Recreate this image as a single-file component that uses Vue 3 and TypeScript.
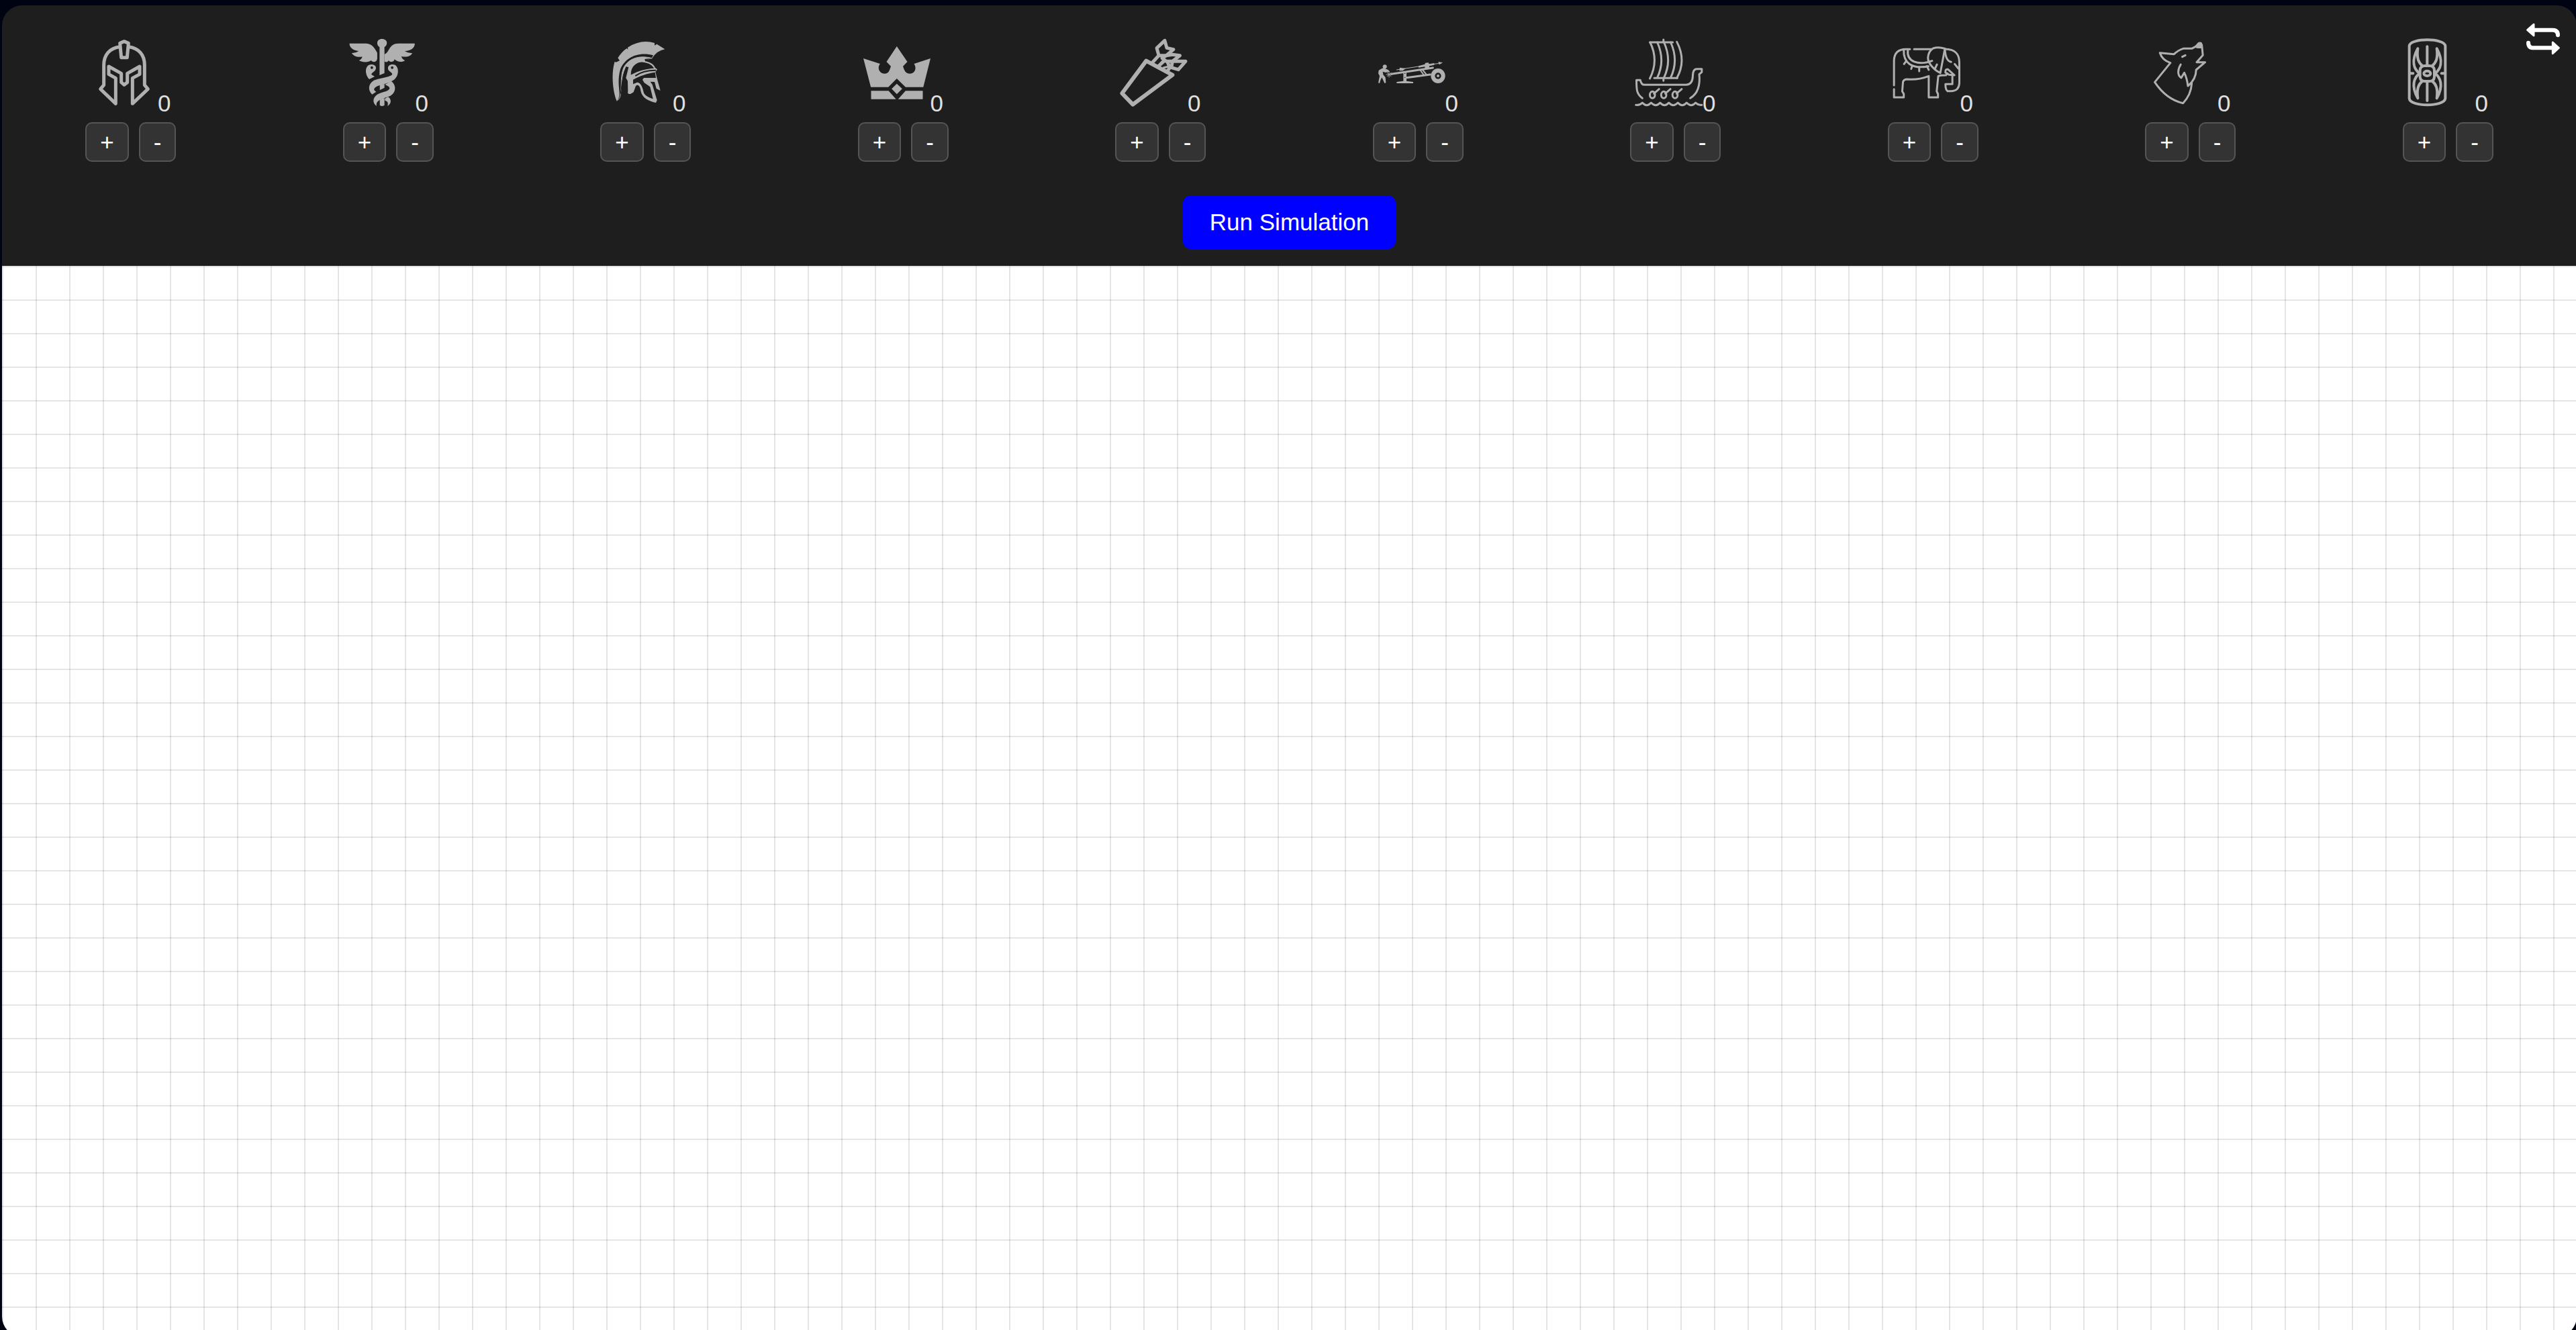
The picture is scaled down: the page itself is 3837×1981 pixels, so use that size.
<script setup lang="ts">
import { ref } from 'vue'

interface Shape {
  d: string
  // 'fill' paints the accent colour, 'cut' paints the panel colour over it
  kind: 'fill' | 'cut' | 'line' | 'cutline'
  w?: number
}

interface Unit {
  name: string
  box: string
  shapes: Shape[]
  count: number
}

const fill = (d: string): Shape => ({ d, kind: 'fill' })
const cut = (d: string): Shape => ({ d, kind: 'cut' })
const line = (d: string, w: number): Shape => ({ d, kind: 'line', w })
const cutline = (d: string, w: number): Shape => ({ d, kind: 'cutline', w })

const units = ref<Unit[]>([
  {
    name: 'Soldier',
    box: '405 174 300 300',
    count: 0,
    shapes: [
      line('M534 209C490 215 464 245 464 290V380L449 398L517 463V349L486 332V297L542 328V368L555 379L569 368V328L624 297V332L592 349V463L661 398L646 380V290C646 245 620 215 576 209', 5),
      line('M536 193L555 185L574 193L568 257H542Z', 5),
    ],
  },
  {
    name: 'Healer',
    box: '102 84 261 300',
    count: 0,
    shapes: [
      fill('M223 120C210 112 210 84 232 84C256 84 256 112 242 120V237L223 246Z'),
      fill('M242 152C262 146 258 104 297 104H360C360 124 346 136 321 138Q334 149 350 147C346 160 330 167 308 162Q310 174 322 180C310 190 292 187 281 175C280 188 264 190 258 180C254 190 244 188 242 184Z'),
      fill('M106 104H170C196 104 206 130 214 146V172C212 190 198 190 190 180C180 190 156 190 143 180Q154 175 156 163C138 168 120 160 115 147Q130 148 142 138C120 135 106 122 106 104Z'),
      fill('M183 264C163 240 166 198 192 198C206 198 213 210 207 222C202 232 190 236 192 244L204 252Z'),
      cut('M188 212a5 6 0 1 0 10 0a5 6 0 1 0 -10 0Z'),
      fill('M224 289L242 285V302L224 313Z'),
      fill('M274 198C298 198 300 240 286 258C276 276 240 286 222 292C200 300 196 312 210 320L194 332C176 312 180 284 200 270C222 258 268 254 272 242C274 234 258 230 256 218C254 206 262 198 274 198Z'),
      cut('M267 212a5 6 0 1 0 10 0a5 6 0 1 0 -10 0Z'),
      fill('M268 272C290 290 288 326 262 340C234 352 206 358 212 384C194 370 196 346 214 332C236 320 262 318 262 304C262 296 250 292 244 288Z'),
      fill('M224 354L242 348V380Q232 388 224 380Z'),
      fill('M244 350L256 343C270 352 270 374 254 384C257 372 256 362 244 360Z'),
    ],
  },
  {
    name: 'Spartan',
    box: '7 24 300 300',
    count: 0,
    shapes: [
      fill('M57 301C38 255 32 175 48 125L54 128L70 121L62 109Q80 80 102 66L107 72L106 62Q165 24 226 42L226 53L236 47L272 70Q236 76 214 112L185 118L213 110L220 97C150 78 92 110 73 160C60 205 68 240 69 265C70 280 66 293 57 301Z'),
      line('M214 110C160 96 112 108 88 152C72 190 80 225 74 270C74 285 64 298 58 300', 1),
      fill('M214 110C160 96 112 108 88 152C76 180 80 210 77 235L90 170L98 148L110 150L98 198L106 212L107 258Q103 272 118 270L132 262L142 234C152 224 162 236 164 256C170 290 205 304 232 309L237 298L216 228L207 215L226 216L234 246L252 255L238 204L230 172L238 160L228 152C222 134 200 126 184 124L182 114Z'),
      cut('M120 184C120 142 150 126 175 128C200 130 218 143 223 155C190 157 155 165 122 184Z'),
      cutline('M142 188C165 171 195 164 230 164', 2),
      cut('M130 206C160 190 190 178 228 173L232 198L178 198L172 206L180 220L206 238L219 292C200 286 180 276 177 262C172 236 162 218 148 218L130 226Z'),
      cutline('M100 150C78 190 84 220 73 270', 1),
    ],
  },
  {
    name: 'King',
    box: '68 84 261 300',
    count: 0,
    shapes: [
      fill('M68 171L133 195C120 215 132 239 150 239C168 239 170 222 175 206L158 186L198 117L239 186L222 206C227 222 230 239 250 239C268 239 277 215 265 195L329 171L301 299H232L198 261L165 299H97Z'),
      fill('M198 284L219 307L198 331L178 307Z'),
      fill('M98 316H166L195 353H98Z'),
      fill('M232 316H299V353H203Z'),
    ],
  },
  {
    name: 'Archer',
    box: '1070 84 261 300',
    count: 0,
    shapes: [
      line('M1170 182L1076 327L1118 377L1272 245Z', 6),
      line('M1242 91L1211 125L1219 158L1248 158L1276 131L1250 124Z', 5),
      line('M1219 158L1192 192', 5),
      line('M1232 170L1248 184L1272 184L1301 158L1272 154L1248 158Z', 5),
      line('M1240 180L1216 208M1252 186L1262 212L1250 232', 5),
      line('M1272 184H1323L1295 221L1268 212Z', 5),
      line('M1222 204L1242 184M1238 212L1262 206', 3),
    ],
  },
  {
    name: 'Ballista',
    box: '40 -66 300 300',
    count: 0,
    shapes: [
      fill('M60 58a9 9 0 1 0 18 0a9 9 0 1 0 -18 0Z'),
      fill('M56 66L64 64L84 72L92 80L72 84L60 80L62 94L72 106L74 130L68 132L56 106L50 118L46 132L40 130L46 100L40 88L42 74Z'),
      line('M76 93H101M88 81V105M80 85L97 101M97 85L80 101', 1),
      line('M98 91L284 63', 3),
      fill('M152 82H166V122L196 126V132H122V126L152 122Z'),
      cut('M157 86h4v4h-4ZM157 104h4v4h-4Z'),
      line('M166 107L272 93', 3),
      line('M228 74L244 96M238 72L256 94', 2),
      line('M122 72L312 43', 1),
      fill('M328 40L308 36L312 49Z'),
      fill('M136 62L162 66L150 76L134 76Z'),
      fill('M220 55L248 47L250 41L264 40L267 46L290 42V50L268 55V62L248 66V58L220 62Z'),
      fill('M275 99a32 33 0 1 0 64 0a32 33 0 1 0 -64 0Z'),
      cut('M293 99a14 14 0 1 0 28 0a14 14 0 1 0 -28 0Z'),
      fill('M301 99a6 6 0 1 0 12 0a6 6 0 1 0 -12 0Z'),
    ],
  },
  {
    name: 'Viking',
    box: '1061 84 261 300',
    count: 0,
    shapes: [
      line('M1117 99H1206M1170 87V99M1134 259H1224M1170 259V271', 3),
      line('M1118 99Q1153 180 1117 261M1146 99Q1178 180 1146 257M1172 99Q1204 180 1172 257M1198 99Q1230 180 1198 257M1222 97Q1260 180 1222 259', 3),
      line('M1088 349C1065 330 1065 310 1065 268H1080Q1084 289 1096 289H1258Q1283 287 1284 250Q1284 218 1300 218H1319V232L1309 242Q1316 320 1274 349', 3),
      line('M1117 334a10 15 0 1 0 20 0a10 15 0 1 0 -20 0ZM1133 328L1153 308', 3),
      line('M1161 334a10 15 0 1 0 20 0a10 15 0 1 0 -20 0ZM1177 328L1197 308', 3),
      line('M1205 334a10 15 0 1 0 20 0a10 15 0 1 0 -20 0ZM1221 328L1241 308', 3),
      line('M1063 379Q1078 381 1088 369Q1105 391 1122 369Q1140 391 1157 369Q1174 391 1191 369Q1208 391 1226 369Q1243 391 1260 369Q1278 391 1295 369Q1306 381 1319 379', 3),
    ],
  },
  {
    name: 'Elephant',
    box: '79 84 261 300',
    count: 0,
    shapes: [
      line('M82 291V180Q84 130 128 130H144M160 130H228', 3),
      line('M82 308V345H120V330L114 318L117 276Q120 264 134 264C168 268 190 262 217 250V345H253V330L248 318L254 250Q262 246 284 246L290 238', 3),
      line('M234 126Q254 118 280 127L262 236C242 226 214 196 214 168Q216 138 234 126Z', 3),
      line('M280 129C326 130 336 158 336 190V282Q334 316 306 317H290Q282 312 282 286H309V250', 3),
      line('M280 129Q282 182 304 187M318 196L332 216', 3),
      line('M282 234Q280 218 292 220L317 246L296 244L282 234', 3),
      line('M120 134C118 190 150 220 216 206M136 134C130 186 176 204 230 182', 3),
      line('M130 182L121 196M153 203L149 218M180 212V228M210 206L217 222M249 198L241 218', 3),
    ],
  },
  {
    name: 'Wolf',
    box: '1080 84 261 300',
    count: 0,
    shapes: [
      line('M1256 118L1241 127H1208Q1188 134 1172 152L1117 146Q1126 178 1158 191L1097 277Q1142 354 1207 371Q1238 334 1241 282', 3),
      fill('M1250 120L1264 101Q1272 94 1281 101L1283 126H1262Z'),
      line('M1280 110L1284 157L1260 188H1293L1258 222Q1258 264 1226 294Q1222 258 1212 235L1200 258C1184 246 1186 220 1198 198', 3),
      line('M1204 164L1216 157', 3),
    ],
  },
  {
    name: 'Legionary',
    box: '141 174 300 300',
    count: 0,
    shapes: [
      line('M146 205C150 169 302 169 307 205V440C302 478 150 478 146 440Z', 4),
      line('M226 208V292M226 365V450M150 328H163M290 328H303', 4),
      line('M194 313Q196 294 215 294H237Q256 294 258 313V344Q256 363 237 363H215Q196 363 194 344Z', 4),
      line('M211 328a15 11 0 1 0 30 0a15 11 0 1 0 -30 0Z', 4),
      line('M205 295C188 280 178 262 184 217C152 275 168 310 192 328C168 346 152 382 184 439C178 394 188 376 205 362', 4),
      line('M248 295C265 280 275 262 269 217C301 275 285 310 261 328C285 346 301 382 269 439C275 394 265 376 248 362', 4),
    ],
  },
])

const add = (u: Unit) => {
  u.count++
}
const remove = (u: Unit) => {
  if (u.count > 0) u.count--
}
</script>

<template>
  <div class="page">
    <main class="panel">
      <header class="toolbar">
        <div class="units">
          <section v-for="u in units" :key="u.name" class="unit" :aria-label="u.name">
            <div class="unit-info">
              <svg class="icon" :viewBox="u.box" preserveAspectRatio="none" aria-hidden="true">
                <path v-for="(s, i) in u.shapes" :key="i" :d="s.d" :class="s.kind" :stroke-width="s.w" />
              </svg>
              <span class="count">{{ u.count }}</span>
            </div>
            <div class="controls">
              <button type="button" class="step" @click="add(u)">+</button>
              <button type="button" class="step" @click="remove(u)">-</button>
            </div>
          </section>
        </div>
        <button type="button" class="run">Run Simulation</button>
        <button type="button" class="swap" aria-label="Swap sides">
          <svg viewBox="669 99 150 150" aria-hidden="true">
            <path class="arrow" d="M690 134H786Q810 134 810 157M678 191Q678 214 702 214H798" />
            <path class="head" d="M674 134L702 109V159ZM814 214L787 189V239Z" />
          </svg>
        </button>
      </header>
      <div class="field"></div>
    </main>
  </div>
</template>

<style>
body {
  margin: 0;
  background: #000312;
}
</style>

<style scoped>
.page {
  box-sizing: border-box;
  height: 100vh;
  padding: 8px 0 0 3px;
  overflow: hidden;
  background: #000312;
  font-family: "Liberation Sans", Arial, sans-serif;
  font-size: 35px;
}
.panel {
  position: relative;
  display: flex;
  flex-direction: column;
  width: calc(100vw - 2px);
  height: calc(100vh + 2px);
  border-radius: 30px;
  overflow: hidden;
}
.toolbar {
  display: flex;
  flex-direction: column;
  align-items: center;
  gap: 50px;
  padding: 50px 0 25px;
  background: #1e1e1e;
}
.units {
  display: flex;
  width: 100%;
}
.unit {
  flex: 1;
  display: flex;
  flex-direction: column;
  align-items: center;
  gap: 8px;
}
.unit-info {
  display: flex;
  align-items: flex-end;
}
.icon {
  width: 100px;
  height: 100px;
  margin-bottom: 16px;
  overflow: visible;
}
.icon path {
  vector-effect: non-scaling-stroke;
  stroke-linejoin: round;
  stroke-linecap: round;
}
.fill {
  fill: #b0b0b0;
}
.cut {
  fill: #1e1e1e;
}
.line {
  fill: none;
  stroke: #b0b0b0;
}
.cutline {
  fill: none;
  stroke: #1e1e1e;
}
.count {
  color: #e0e0e0;
  line-height: 40px;
}
.controls {
  display: flex;
  gap: 15px;
}
.step {
  padding: 8px 20px;
  border: 2px solid #555;
  border-radius: 10px;
  background: #333;
  color: #fff;
  font: inherit;
  line-height: 39px;
}
.run {
  padding: 20px 40px;
  border: 0;
  border-radius: 12px;
  background: #00f;
  color: #fff;
  font: inherit;
  line-height: 40px;
}
.swap {
  position: absolute;
  top: 25px;
  right: 25px;
  width: 50px;
  height: 50px;
  padding: 0;
  border: 0;
  background: none;
}
.swap svg {
  display: block;
  width: 100%;
  height: 100%;
}
.arrow {
  fill: none;
  stroke: #fff;
  stroke-width: 18;
  stroke-linecap: round;
}
.head {
  fill: #fff;
  stroke: #fff;
  stroke-width: 9;
  stroke-linejoin: round;
}
.field {
  flex: 1;
  background-color: #fff;
  background-image:
    linear-gradient(to right, rgba(0, 0, 0, 0.1) 2px, transparent 2px),
    linear-gradient(to bottom, rgba(0, 0, 0, 0.1) 2px, transparent 2px);
  background-size: 50px 50px;
}
</style>
